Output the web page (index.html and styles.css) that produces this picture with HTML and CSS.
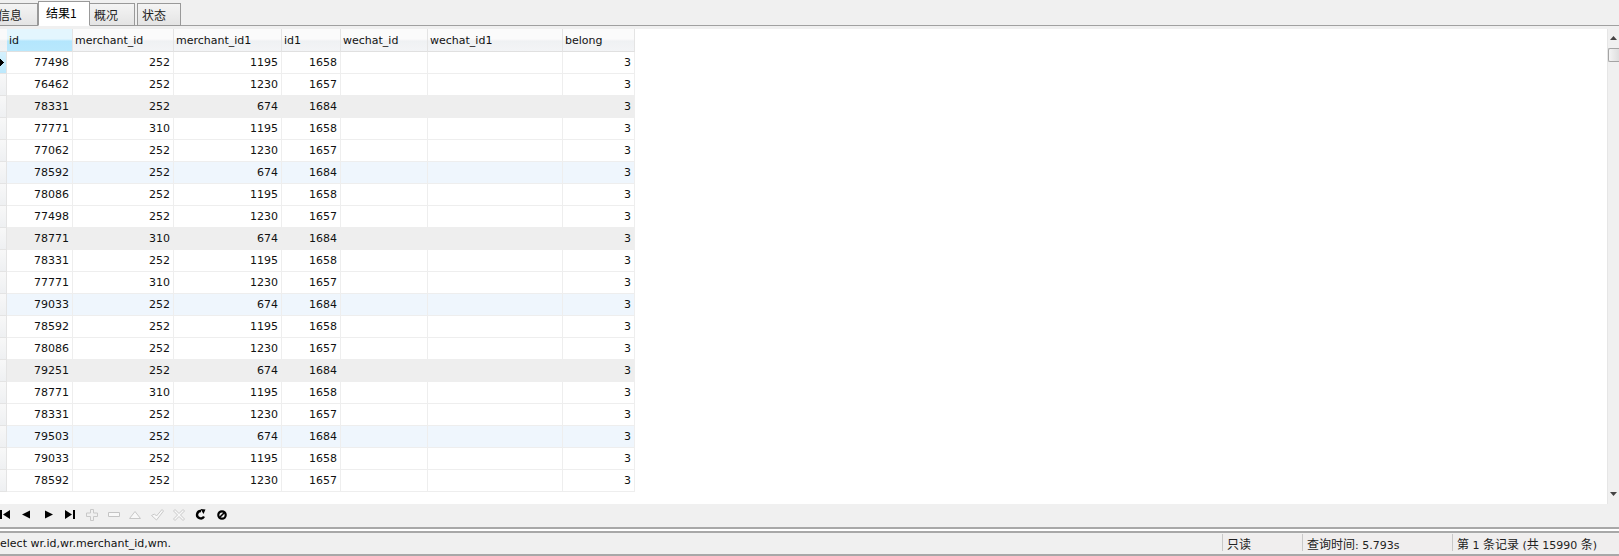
FILE: index.html
```html
<!DOCTYPE html>
<html lang="zh-CN">
<head>
<meta charset="utf-8">
<title>结果1</title>
<link rel="stylesheet" href="styles.css">
</head>
<body>
<div class="tabbar">
  <div class="tab tab-clip">信息</div>
  <div class="tab active">结果1</div>
  <div class="tab tab-a">概况</div>
  <div class="tab tab-b">状态</div>
</div>
<div class="gap-top"></div>
<div class="grid-area">
  <div class="grid-main">
    <div class="gutter">
      <div class="g-head"></div>
      <div class="g-cell g-cur"><svg class="g-arrow" width="6" height="9" viewBox="0 0 6 9"><path d="M0 3h1V1h1v1h1v1h1v1h1v1H4v1H3v1H2v1H1V6H0z" fill="#000"/></svg></div>
      <div class="g-cell"></div><div class="g-cell"></div><div class="g-cell"></div><div class="g-cell"></div>
      <div class="g-cell"></div><div class="g-cell"></div><div class="g-cell"></div><div class="g-cell"></div>
      <div class="g-cell"></div><div class="g-cell"></div><div class="g-cell"></div><div class="g-cell"></div>
      <div class="g-cell"></div><div class="g-cell"></div><div class="g-cell"></div><div class="g-cell"></div>
      <div class="g-cell"></div><div class="g-cell"></div><div class="g-cell"></div>
    </div>
    <table class="data">
      <colgroup>
        <col class="c1"><col class="c2"><col class="c3"><col class="c4"><col class="c5"><col class="c6"><col class="c7">
      </colgroup>
      <thead>
        <tr><th class="sel">id</th><th>merchant_id</th><th>merchant_id1</th><th>id1</th><th>wechat_id</th><th>wechat_id1</th><th>belong</th></tr>
      </thead>
      <tbody>
        <tr><td>77498</td><td>252</td><td>1195</td><td>1658</td><td></td><td></td><td>3</td></tr>
        <tr><td>76462</td><td>252</td><td>1230</td><td>1657</td><td></td><td></td><td>3</td></tr>
        <tr class="gray"><td>78331</td><td>252</td><td>674</td><td>1684</td><td></td><td></td><td>3</td></tr>
        <tr><td>77771</td><td>310</td><td>1195</td><td>1658</td><td></td><td></td><td>3</td></tr>
        <tr><td>77062</td><td>252</td><td>1230</td><td>1657</td><td></td><td></td><td>3</td></tr>
        <tr class="blue"><td>78592</td><td>252</td><td>674</td><td>1684</td><td></td><td></td><td>3</td></tr>
        <tr><td>78086</td><td>252</td><td>1195</td><td>1658</td><td></td><td></td><td>3</td></tr>
        <tr><td>77498</td><td>252</td><td>1230</td><td>1657</td><td></td><td></td><td>3</td></tr>
        <tr class="gray"><td>78771</td><td>310</td><td>674</td><td>1684</td><td></td><td></td><td>3</td></tr>
        <tr><td>78331</td><td>252</td><td>1195</td><td>1658</td><td></td><td></td><td>3</td></tr>
        <tr><td>77771</td><td>310</td><td>1230</td><td>1657</td><td></td><td></td><td>3</td></tr>
        <tr class="blue"><td>79033</td><td>252</td><td>674</td><td>1684</td><td></td><td></td><td>3</td></tr>
        <tr><td>78592</td><td>252</td><td>1195</td><td>1658</td><td></td><td></td><td>3</td></tr>
        <tr><td>78086</td><td>252</td><td>1230</td><td>1657</td><td></td><td></td><td>3</td></tr>
        <tr class="gray"><td>79251</td><td>252</td><td>674</td><td>1684</td><td></td><td></td><td>3</td></tr>
        <tr><td>78771</td><td>310</td><td>1195</td><td>1658</td><td></td><td></td><td>3</td></tr>
        <tr><td>78331</td><td>252</td><td>1230</td><td>1657</td><td></td><td></td><td>3</td></tr>
        <tr class="blue"><td>79503</td><td>252</td><td>674</td><td>1684</td><td></td><td></td><td>3</td></tr>
        <tr><td>79033</td><td>252</td><td>1195</td><td>1658</td><td></td><td></td><td>3</td></tr>
        <tr><td>78592</td><td>252</td><td>1230</td><td>1657</td><td></td><td></td><td>3</td></tr>
      </tbody>
    </table>
  </div>
  <div class="scrollbar">
    <svg class="sb-arrow" width="7" height="4" viewBox="0 0 7 4"><path d="M3.500 0L7 4H0z" fill="#444"/></svg>
    <div class="sb-thumb"></div>
    <div class="sb-track"></div>
    <svg class="sb-arrow" width="7" height="4" viewBox="0 0 7 4"><path d="M0 0h7L3.500 4z" fill="#444"/></svg>
  </div>
</div>
<div class="navbar">
  <span class="slot"><svg width="10" height="9" viewBox="0 0 10 9"><path d="M0 0h2v9H0zM3 4.500L10 0v9z" fill="#000"/></svg></span>
  <span class="slot"><svg width="9" height="9" viewBox="0 0 9 9"><path d="M8 .5v8L0 4.500z" fill="#000"/></svg></span>
  <span class="slot"><svg width="9" height="9" viewBox="0 0 9 9"><path d="M1 .5v8l8-4z" fill="#000"/></svg></span>
  <span class="slot"><svg width="10" height="9" viewBox="0 0 10 9"><path d="M0 0l7 4.500L0 9zM8 0h2v9H8z" fill="#000"/></svg></span>
  <span class="slot"><svg width="12" height="12" viewBox="0 0 12 12"><path d="M4.500.5h3v3.500h4v3.500h-4v4h-3v-4h-4V4h4z" fill="none" stroke="#c8c8c8"/></svg></span>
  <span class="slot"><svg width="12" height="7" viewBox="0 0 12 7"><path d="M.5 1.500h11v4H.5z" fill="#f8f8f8" stroke="#c4c4c4"/></svg></span>
  <span class="slot"><svg width="12" height="9" viewBox="0 0 12 9"><path d="M.5 8.500L6 1.500l5.500 7z" fill="#f8f8f8" stroke="#c8c8c8"/></svg></span>
  <span class="slot"><svg width="13" height="12" viewBox="0 0 13 12"><path d="M.5 6.500l3-1.500 2 2L11 .5l1.500 1.500L5.500 11z" fill="#f8f8f8" stroke="#c8c8c8"/></svg></span>
  <span class="slot"><svg width="12" height="12" viewBox="0 0 12 12"><path d="M.5 2L2 .5l4 4 4-4L11.500 2l-4 4 4 4-1.500 1.500-4-4-4 4L.5 10l4-4z" fill="#f8f8f8" stroke="#c8c8c8"/></svg></span>
  <span class="slot"><svg width="11" height="11" viewBox="0 0 11 11"><path d="M9 7.500A3.700 3.700 0 1 1 6 2" fill="none" stroke="#000" stroke-width="2.400"/><path d="M5.500 0l5 .5-2 4.500z" fill="#000"/></svg></span>
  <span class="slot"><svg width="10" height="10" viewBox="0 0 10 10"><circle cx="5" cy="5" r="3.700" fill="none" stroke="#000" stroke-width="2.200"/><path d="M2.500 7.500L7.500 2.500" stroke="#000" stroke-width="1.600"/></svg></span>
</div>
<div class="rules">
  <div class="rule"></div>
  <div class="rule"></div>
</div>
<div class="status">
  <div class="st-sql">elect wr.id,wr.merchant_id,wm.</div>
  <div class="st-cell st-ro"><span class="cjk">只读</span></div>
  <div class="st-cell st-time"><span class="cjk">查询时间</span>: 5.793s</div>
  <div class="st-cell st-rec"><span class="cjk">第</span> 1 <span class="cjk">条记录</span> (<span class="cjk">共</span> 15990 <span class="cjk">条</span>)</div>
</div>
<div class="bottom-line"></div>
</body>
</html>
```
FILE: styles.css
```css
html, body {
  margin: 0;
  padding: 0;
  width: 1619px;
  height: 556px;
  overflow: hidden;
  background: #f0f0f0;
  color: #000;
  font-family: "DejaVu Sans", "Noto Sans CJK SC", sans-serif;
  font-size: 11px;
}

.tabbar {
  display: flex;
  align-items: flex-end;
  height: 26px;
  box-sizing: border-box;
  border-bottom: 1px solid #a0a0a0;
}
.tab {
  box-sizing: border-box;
  height: 23px;
  margin-bottom: -1px;
  padding-top: 2px;
  border: 1px solid #999;
  background: linear-gradient(#f4f4f4, #e4e4e4);
  font-family: "Noto Sans CJK SC", sans-serif;
  font-size: 12px;
  line-height: 18px;
  color: #222;
  white-space: nowrap;
}
.tab-clip {
  width: 38px;
  border-left: none;
  text-indent: -2px;
}
.tab.active {
  height: 25px;
  width: 52px;
  padding: 2px 0 0 7px;
  background: #fff;
  border-bottom-color: #fff;
  color: #000;
}
.tab-a {
  width: 45px;
  margin-right: 2px;
  border-left: none;
  padding-left: 4px;
}
.tab-b {
  width: 44px;
  padding-left: 4px;
}

.gap-top { height: 3px; }

.grid-area {
  display: flex;
  height: 475px;
  background: #fff;
}
.grid-main {
  flex: 1;
  display: flex;
  align-items: flex-start;
  min-width: 0;
}
.gutter {
  width: 7px;
  flex: none;
}
.g-head {
  height: 23px;
  box-sizing: border-box;
  background: linear-gradient(#fafafa 0, #fafafa 45%, #eef0f2 55%, #f0f2f4 100%);
  border-bottom: 1px solid #e2e2e2;
}
.g-cell {
  height: 22px;
  box-sizing: border-box;
  background: linear-gradient(#f8f8f8, #eef0f2);
  border-bottom: 1px solid #e4e4e4;
  border-right: 1px solid #e4e4e4;
  display: flex;
  align-items: center;
  overflow: hidden;
}
.g-cell.g-cur { background: linear-gradient(#d6f1fd, #bce8fc); }
.g-arrow { display: block; flex: none; margin-left: -1px; }

.data {
  border-collapse: separate;
  border-spacing: 0;
  table-layout: fixed;
  width: 628px;
}
.c1 { width: 66px; }
.c2 { width: 101px; }
.c3 { width: 108px; }
.c4 { width: 59px; }
.c5 { width: 87px; }
.c6 { width: 135px; }
.c7 { width: 72px; }

.data th {
  height: 23px;
  box-sizing: border-box;
  padding: 1px 0 0 2px;
  font-weight: normal;
  text-align: left;
  color: #111;
  background: linear-gradient(#fbfbfb 0, #fbfbfb 45%, #eff1f3 55%, #f3f4f6 100%);
  border-right: 1px solid #e4e4e4;
  border-bottom: 1px solid #e0e0e0;
  white-space: nowrap;
}
.data th.sel {
  background: linear-gradient(#e3f6fe 0, #e3f6fe 45%, #b4e6fd 55%, #b8e8fd 100%);
}
.data td {
  height: 22px;
  box-sizing: border-box;
  padding: 0 3px 0 0;
  text-align: right;
  color: #111;
  border-right: 1px solid #eee;
  border-bottom: 1px solid #eee;
  white-space: nowrap;
}
.data tr.gray td { background: #eeeeee; }
.data tr.blue td { background: #eff6fd; }

.scrollbar {
  flex: none;
  width: 12px;
  display: flex;
  flex-direction: column;
  align-items: center;
  background: #f0f0f0;
  border-left: 1px solid #e6e6e6;
  box-sizing: border-box;
}
.sb-arrow { flex: none; margin: 7px 0 8px; }
.sb-thumb {
  flex: none;
  align-self: stretch;
  height: 14px;
  box-sizing: border-box;
  border: 1px solid #a4a4a4;
  border-right: none;
  border-radius: 2px 0 0 2px;
  background: linear-gradient(90deg, #f4f4f4, #dedede);
}
.sb-track { flex: 1; }

.navbar {
  display: flex;
  align-items: center;
  height: 21px;
  margin-left: -6px;
  overflow: hidden;
}
.slot {
  flex: none;
  width: 21.75px;
  display: flex;
  justify-content: center;
  align-items: center;
}

.rules {
  margin-top: 2px;
  height: 6px;
  display: flex;
  flex-direction: column;
  justify-content: space-between;
  background: #fff;
}
.rule {
  height: 2px;
  background: #a8a8a8;
}

.status {
  display: flex;
  height: 17px;
  margin-top: 1px;
  background: #f0eeee;
  line-height: 14px;
  color: #222;
}
.cjk {
  font-family: "Noto Sans CJK SC", sans-serif;
  font-size: 12px;
}
.st-sql {
  flex: none;
  box-sizing: border-box;
  width: 1222px;
  padding-top: 3px;
  background: #f0f0f0;
  color: #111;
}
.st-cell {
  flex: none;
  box-sizing: border-box;
  border-left: 1px solid #c8c8c8;
  padding: 3px 0 0 4px;
  white-space: nowrap;
}
.st-ro { width: 80px; }
.st-time { width: 150px; }
.st-rec { flex: 1; }

.bottom-line {
  height: 2px;
  margin-top: 3px;
  background: #a8a8a8;
}
```
